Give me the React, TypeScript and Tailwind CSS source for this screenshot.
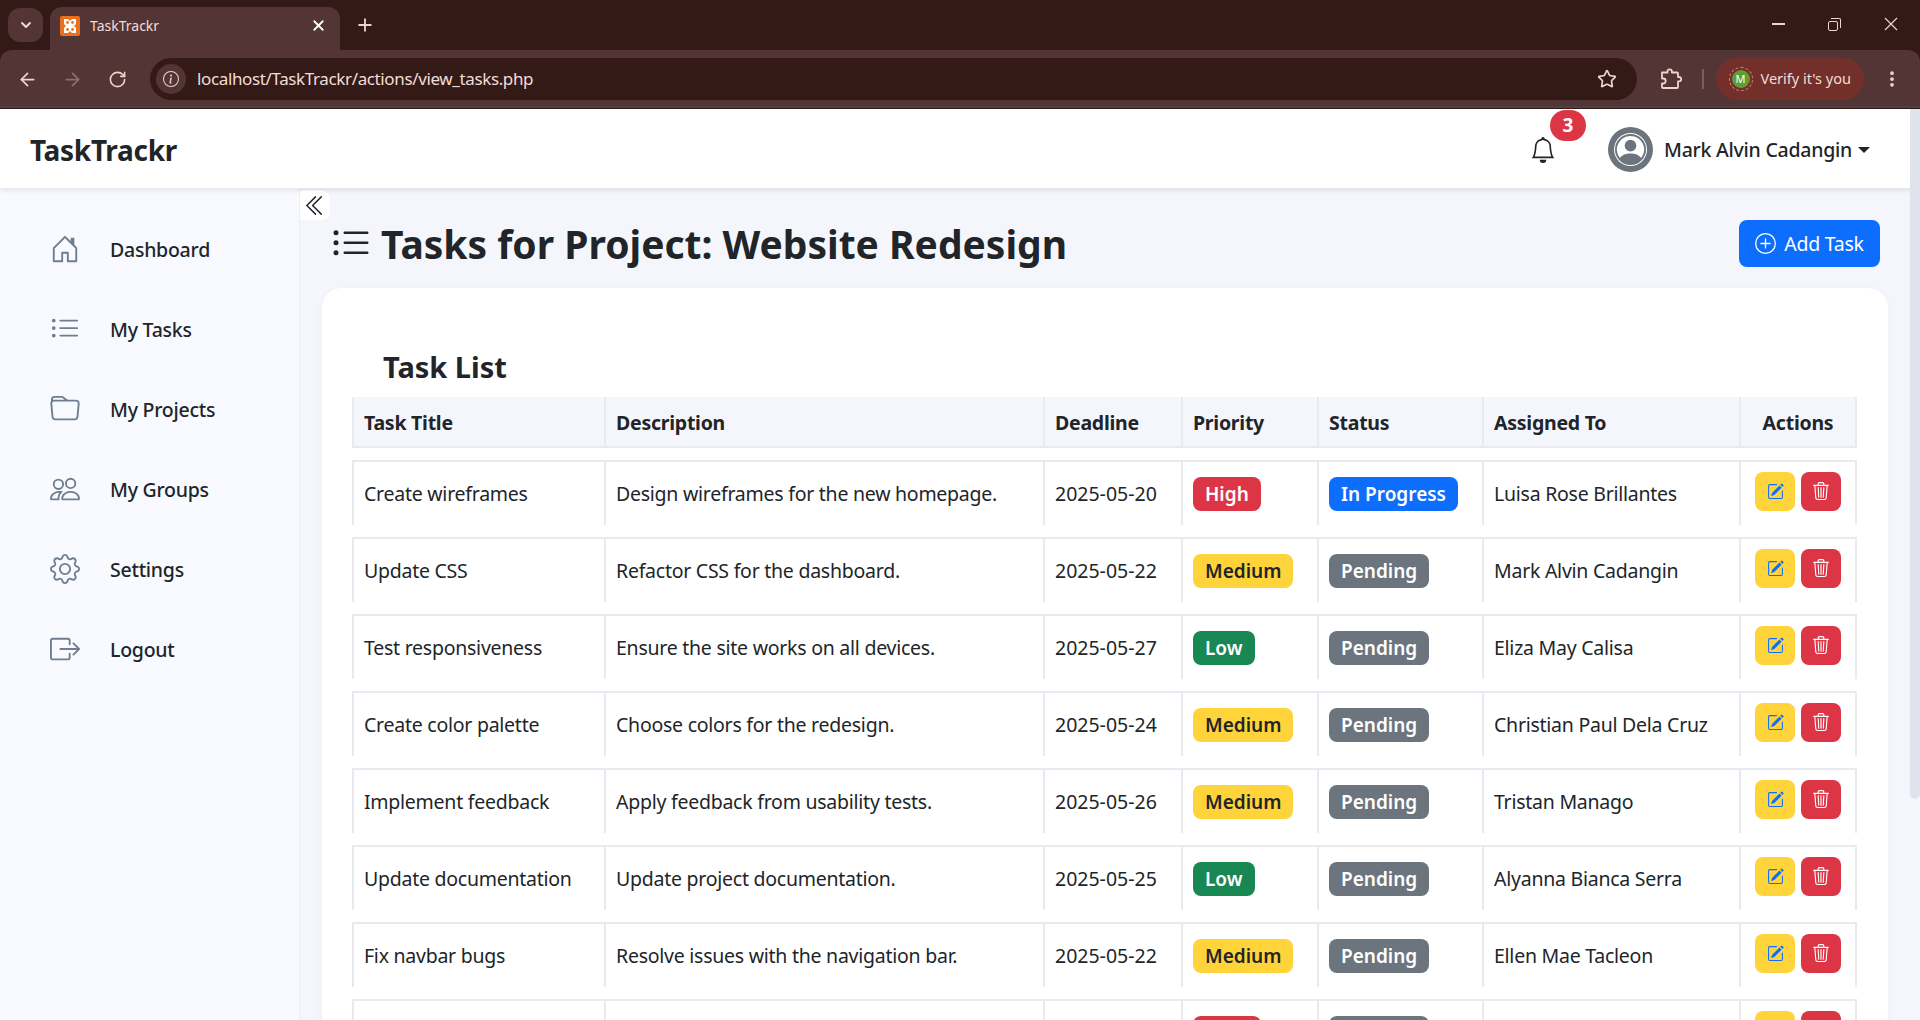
import { ArrowLeft, ArrowRight, ChevronDown, MoreVertical, Plus, RotateCw, Star, X } from 'lucide-react';
import {
  BsBell,
  BsBoxArrowRight,
  BsChevronDoubleLeft,
  BsFolder,
  BsGear,
  BsHouseDoor,
  BsInfoCircle,
  BsListUl,
  BsPencilSquare,
  BsPeople,
  BsPersonCircle,
  BsPlusCircle,
  BsTrash3,
} from 'react-icons/bs';

const NAV_ITEMS = [
  { label: 'Dashboard', icon: BsHouseDoor },
  { label: 'My Tasks', icon: BsListUl },
  { label: 'My Projects', icon: BsFolder },
  { label: 'My Groups', icon: BsPeople },
  { label: 'Settings', icon: BsGear },
  { label: 'Logout', icon: BsBoxArrowRight },
];

// last row is cut off by the window, only the tops of its badges show
const TASKS = [
  { title: 'Create wireframes', desc: 'Design wireframes for the new homepage.', date: '2025-05-20', priority: 'High', status: 'In Progress', who: 'Luisa Rose Brillantes' },
  { title: 'Update CSS', desc: 'Refactor CSS for the dashboard.', date: '2025-05-22', priority: 'Medium', status: 'Pending', who: 'Mark Alvin Cadangin' },
  { title: 'Test responsiveness', desc: 'Ensure the site works on all devices.', date: '2025-05-27', priority: 'Low', status: 'Pending', who: 'Eliza May Calisa' },
  { title: 'Create color palette', desc: 'Choose colors for the redesign.', date: '2025-05-24', priority: 'Medium', status: 'Pending', who: 'Christian Paul Dela Cruz' },
  { title: 'Implement feedback', desc: 'Apply feedback from usability tests.', date: '2025-05-26', priority: 'Medium', status: 'Pending', who: 'Tristan Manago' },
  { title: 'Update documentation', desc: 'Update project documentation.', date: '2025-05-25', priority: 'Low', status: 'Pending', who: 'Alyanna Bianca Serra' },
  { title: 'Fix navbar bugs', desc: 'Resolve issues with the navigation bar.', date: '2025-05-22', priority: 'Medium', status: 'Pending', who: 'Ellen Mae Tacleon' },
  { title: '', desc: '', date: '', priority: 'High', status: 'Pending', who: '' },
];

const HEADERS = ['Task Title', 'Description', 'Deadline', 'Priority', 'Status', 'Assigned To'];

const BADGE_COLORS: Record<string, string> = {
  High: 'bg-[#dc3545] text-white',
  Medium: 'bg-[#ffd43a] text-[#212529]',
  Low: 'bg-[#198754] text-white',
  'In Progress': 'bg-[#0d6efd] text-white',
  Pending: 'bg-[#6c757d] text-white',
};

function Badge({ text }: { text: string }) {
  return (
    <span className={`inline-block h-[34px] rounded-lg px-3 text-[19px] leading-[34px] font-semibold tracking-normal ${BADGE_COLORS[text]}`}>
      {text}
    </span>
  );
}

function BrowserChrome() {
  return (
    <div className="h-[109px] shrink-0 bg-[#331a16] text-[#f0d5cc]">
      <div className="flex h-[50px] items-end">
        <div className="mb-2 ml-2 flex h-[34px] w-[35px] items-center justify-center rounded-xl bg-[#533535]">
          <ChevronDown size={16} strokeWidth={3} />
        </div>
        <div className="ml-[7px] flex h-[43px] w-[290px] items-center rounded-t-xl bg-[#533535] pb-[6px] pl-[10px] pr-[13px]">
          <svg width="20" height="20" viewBox="0 0 20 20">
            <rect width="20" height="20" rx="2" fill="#e8701f" />
            <path d="M4 3h4l2 2 2-2h4v5l-2 2 2 2v5h-4l-2-2-2 2H4v-5l2-2-2-2z" fill="#fff" />
            <circle cx="7.5" cy="6.5" r="1.4" fill="#e8701f" />
            <circle cx="12.5" cy="6.5" r="1.4" fill="#e8701f" />
            <circle cx="7.5" cy="13.5" r="1.4" fill="#e8701f" />
            <circle cx="12.5" cy="13.5" r="1.4" fill="#e8701f" />
          </svg>
          <span className="ml-[10px] flex-1 text-[14px] text-[#f3dcd6]">TaskTrackr</span>
          <X size={17} strokeWidth={2.5} className="text-white" />
        </div>
        <Plus size={20} strokeWidth={2.2} className="mb-[15px] ml-[15px]" />
        <div className="mb-[19px] ml-auto flex items-center gap-[43px] pr-[22px]">
          <div className="h-[1.5px] w-[13px] bg-[#f0d5cc]" />
          <div className="relative h-[13px] w-[13px]">
            <div className="absolute bottom-0 left-0 h-[10px] w-[10px] rounded-[2px] border border-[#f0d5cc]" />
            <div className="absolute right-0 top-0 h-[10px] w-[10px] rounded-tr-[2px] border-r border-t border-[#f0d5cc]" />
          </div>
          <svg width="14" height="14" viewBox="0 0 14 14" stroke="currentColor" strokeWidth="1.2">
            <path d="M1 1l12 12M13 1L1 13" />
          </svg>
        </div>
      </div>
      <div className="flex h-[58px] items-center rounded-t-xl border-b-2 border-[#4d4246] bg-[#533535] pt-[2px]">
        <ArrowLeft size={21} strokeWidth={2} className="ml-[17px]" />
        <ArrowRight size={21} strokeWidth={2} className="ml-[24px] text-[#8e7069]" />
        <RotateCw size={19} strokeWidth={2} className="ml-[25px]" />
        <div className="ml-[23px] flex h-[42px] w-[1487px] items-center rounded-full bg-[#331a16] pl-[6px] pr-[20px]">
          <div className="flex h-[30px] w-[30px] items-center justify-center rounded-full bg-[#533535]">
            <BsInfoCircle size={16} />
          </div>
          <span className="ml-[11px] flex-1 text-[17px] tracking-[-0.37px] text-[#f3dcd6]">
            localhost/TaskTrackr/actions/view_tasks.php
          </span>
          <Star size={20} strokeWidth={2} />
        </div>
        <svg width="22" height="22" viewBox="0 0 22 22" fill="none" stroke="currentColor" strokeWidth="1.8" strokeLinejoin="round" className="ml-[23px]">
          <path d="M2 4.5h5.500V3.500a2.200 2.200 0 0 1 4.400 0v1H17a1 1 0 0 1 1 1V9h1a2.200 2.200 0 0 1 0 4.400h-1V19a1 1 0 0 1-1 1H3a1 1 0 0 1-1-1v-3.500h1.200a2.500 2.500 0 0 0 0-5H2z" />
        </svg>
        <div className="ml-[20px] h-[20px] w-[1.5px] bg-[#7a5d57]" />
        <div className="ml-[12px] flex h-[42px] w-[148px] items-center rounded-full bg-[#73302b] pl-[13px]">
          <div className="flex h-[24px] w-[24px] items-center justify-center rounded-full border border-dashed border-[#d9806f]">
            <div className="flex h-[18px] w-[18px] items-center justify-center rounded-full bg-[#5f9e33] text-[11px] text-white">
              M
            </div>
          </div>
          <span className="ml-[8px] text-[14.5px] text-[#f3dcd6]">Verify it's you</span>
        </div>
        <MoreVertical size={20} strokeWidth={2.5} className="ml-[18px]" />
      </div>
    </div>
  );
}

function Navbar() {
  return (
    <header className="relative z-10 flex h-[79px] shrink-0 items-center bg-white pl-[30px] pr-[50px] pt-[2px] shadow-[0_2px_6px_rgba(0,0,0,0.1)]">
      <span className="text-[28px] leading-none font-bold tracking-[-0.3px] text-[#212529]">TaskTrackr</span>
      <div className="relative ml-auto mr-[52px]">
        <BsBell size={26} className="text-[#212529]" />
        <span className="absolute -top-[27px] left-[20px] flex h-[31px] w-[36px] items-center justify-center rounded-full bg-[#dc3545] text-[19px] font-bold text-white">
          3
        </span>
      </div>
      <div className="flex h-[45px] w-[45px] items-center justify-center rounded-full bg-[#6c757d]">
        <div className="rounded-full bg-white p-[1px]">
          <BsPersonCircle size={31} className="text-[#6c757d]" />
        </div>
      </div>
      <span className="ml-[11px] text-[19.5px] font-medium tracking-[-0.25px] text-[#212529]">Mark Alvin Cadangin</span>
      <div className="ml-[6px] h-0 w-0 border-x-[6px] border-t-[6px] border-x-transparent border-t-[#212529]" />
    </header>
  );
}

function Sidebar() {
  return (
    <aside className="flex w-[300px] shrink-0 flex-col border-r border-[#eceef4] bg-[#f8faff] pt-[22px]">
      {NAV_ITEMS.map((item) => (
        <div key={item.label} className="flex h-[80px] items-center pl-[50px]">
          <item.icon size={30} className="-mt-[2px] text-[#6f7d90]" />
          <span className="ml-[30px] text-[19.5px] font-medium tracking-[-0.25px] text-[#212529]">{item.label}</span>
        </div>
      ))}
    </aside>
  );
}

function TaskRow({ task }: { task: (typeof TASKS)[number] }) {
  const cell = 'h-[65px] border-l-2 border-t-2 border-[#e9e9f1] px-[10px] align-middle';
  return (
    <tr>
      <td className={cell}>{task.title}</td>
      <td className={cell}>{task.desc}</td>
      <td className={`${cell} tracking-normal`}>{task.date}</td>
      <td className={cell}><Badge text={task.priority} /></td>
      <td className={cell}><Badge text={task.status} /></td>
      <td className={cell}>{task.who}</td>
      <td className={`${cell} border-r-2`}>
        <div className="-mt-[5px] flex justify-center gap-[6px]">
          <button className="flex h-[39px] w-[40px] items-center justify-center rounded-lg bg-[#ffd43a] text-[#0d6efd]">
            <BsPencilSquare size={17} />
          </button>
          <button className="flex h-[39px] w-[40px] items-center justify-center rounded-lg bg-[#dc3545] text-white">
            <BsTrash3 size={18} />
          </button>
        </div>
      </td>
    </tr>
  );
}

function TaskTable() {
  const head = 'h-[51px] border-b-2 border-l-2 border-[#e9e9f1] bg-[#f5f6fb] px-[10px] pt-[2px] font-bold';
  return (
    <table className="-mt-3 w-[1505px] table-fixed border-separate border-spacing-y-3 text-[19.5px] leading-[30px] tracking-[-0.25px] text-[#212529]">
      <colgroup>
        <col className="w-[252px]" />
        <col className="w-[439px]" />
        <col className="w-[138px]" />
        <col className="w-[136px]" />
        <col className="w-[165px]" />
        <col className="w-[257px]" />
        <col className="w-[118px]" />
      </colgroup>
      <thead>
        <tr>
          {HEADERS.map((h) => (
            <th key={h} className={`${head} text-left`}>{h}</th>
          ))}
          <th className={`${head} border-r-2 text-center`}>Actions</th>
        </tr>
      </thead>
      <tbody>
        {TASKS.map((task, i) => (
          <TaskRow key={i} task={task} />
        ))}
      </tbody>
    </table>
  );
}

export default function App() {
  return (
    <div className="flex h-screen flex-col overflow-hidden bg-[#f4f6fb] font-['Noto_Sans',sans-serif]">
      <BrowserChrome />
      <div className="relative flex min-h-0 flex-1 flex-col">
        <Navbar />
        <div className="relative flex min-h-0 flex-1">
          <Sidebar />
          <button className="absolute left-[300px] top-[3px] z-10 flex h-[29px] w-[30px] items-center justify-center rounded-r-lg bg-white text-[#212529]">
            <BsChevronDoubleLeft size={23} />
          </button>
          <main className="min-w-0 flex-1 pl-[22px] pr-[32px]">
            <div className="flex h-[100px] items-center pr-[8px] pt-[11px]">
              <BsListUl size={40} className="ml-[9px] mr-[10px] text-[#212529]" />
              <h1 className="text-[39px] leading-none font-bold text-[#212529]">Tasks for Project: Website Redesign</h1>
              <button className="ml-auto flex h-[47px] w-[141px] items-center justify-center gap-2 rounded-lg bg-[#0d6efd] text-[19.5px] tracking-[-0.25px] text-white">
                <BsPlusCircle size={21} />
                Add Task
              </button>
            </div>
            <section className="h-[900px] rounded-[20px] bg-white px-[30px] pt-[56px] shadow-[0_2px_10px_rgba(0,0,0,0.03)]">
              <h2 className="mb-[8px] ml-[31px] text-[29px] leading-[45px] font-bold text-[#212529]">Task List</h2>
              <TaskTable />
            </section>
          </main>
        </div>
        <div className="absolute right-0 top-0 z-20 h-[690px] w-[10px] rounded-b-md bg-[#e0e3ec]" />
      </div>
    </div>
  );
}
